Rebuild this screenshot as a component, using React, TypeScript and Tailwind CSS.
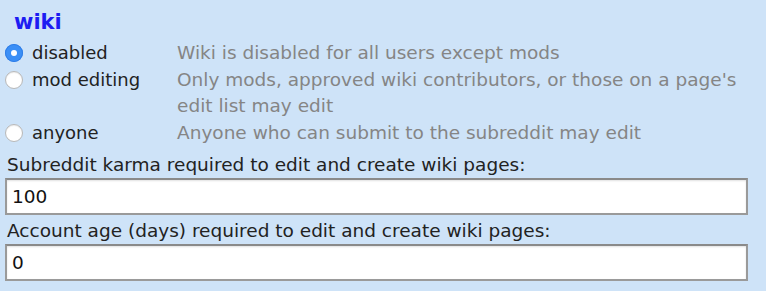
import React from "react";

const options = [
  { id: "disabled", label: "disabled", desc: "Wiki is disabled for all users except mods", checked: true },
  {
    id: "modonly",
    label: "mod editing",
    desc: "Only mods, approved wiki contributors, or those on a page's edit list may edit",
    checked: false,
  },
  { id: "anyone", label: "anyone", desc: "Anyone who can submit to the subreddit may edit", checked: false },
];

function Radio({ checked }: { checked: boolean }) {
  if (checked) {
    return (
      <span className="flex h-[18px] w-[18px] shrink-0 items-center justify-center rounded-full bg-[#3b8ff6] shadow-[inset_0_0_0_1px_#2f7de6]">
        <span className="block h-[6px] w-[6px] rounded-full bg-white" />
      </span>
    );
  }
  return (
    <span className="block h-[18px] w-[18px] shrink-0 rounded-full border border-[#b8b8b8] bg-white shadow-[inset_0_1px_1px_rgba(0,0,0,0.08)]" />
  );
}

const inputCls =
  "mt-[2px] h-[37px] w-[743px] border-2 border-[#9a9a9a] border-t-[#8a8a8a] bg-white px-[5px] text-[18.5px] text-[#111] shadow-[inset_0_1px_2px_rgba(0,0,0,0.12)] outline-none";

export default function App() {
  const font = { fontFamily: '"DejaVu Sans", Verdana, sans-serif' };
  return (
    <div className="h-[291px] w-[766px] overflow-hidden bg-[#cee3f8] pl-[5px] text-[#222]" style={font}>
      <h1 className="ml-[9px] pt-[10px] text-[21px] font-bold leading-[25px] text-[#1c1cf2]">wiki</h1>

      <div className="mt-[5px] flex flex-col">
        {options.map((o) => (
          <div key={o.id} className="flex text-[18px] leading-[26.5px]">
            <label className="flex w-[172px] shrink-0 items-start gap-[9px]">
              <span className="mt-[4px] block">
                <Radio checked={o.checked} />
              </span>
              <span>{o.label}</span>
            </label>
            <div className="max-w-[580px] text-[18.5px] text-[#858585]">{o.desc}</div>
          </div>
        ))}
      </div>

      <div className="mt-[8px] flex flex-col">
        <label className="pl-[2px] text-[18.5px] leading-[22px]">
          Subreddit karma required to edit and create wiki pages:
        </label>
        <input defaultValue="100" className={inputCls} style={font} />
        <label className="mt-[5px] pl-[2px] text-[18.5px] leading-[22px]">
          Account age (days) required to edit and create wiki pages:
        </label>
        <input defaultValue="0" className={inputCls} style={font} />
      </div>
    </div>
  );
}
